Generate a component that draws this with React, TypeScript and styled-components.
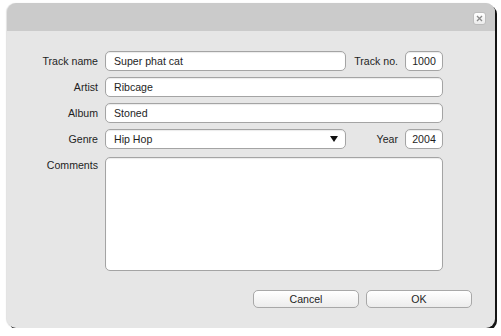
import React from 'react';
import styled, { createGlobalStyle } from 'styled-components';

const GlobalStyle = createGlobalStyle`
  html, body {
    margin: 0;
    padding: 0;
    background: #ffffff;
  }
  body {
    font-family: "Liberation Sans", Arial, sans-serif;
    font-size: 10.6px;
    color: #1e1e1e;
  }
`;

const Page = styled.div`
  padding: 3px 0 0 7px;
`;

const Window = styled.div`
  width: 488px;
  height: 325px;
  background: #e6e6e6;
  border-radius: 9px;
  box-shadow: 2px 2px 0 #151515, -1px 0 1px rgba(0, 0, 0, 0.12);
  overflow: hidden;
  display: flex;
  flex-direction: column;
`;

const TitleBar = styled.div`
  height: 28px;
  background: #cbcbcb;
  display: flex;
  align-items: center;
  justify-content: flex-end;
  padding-right: 9px;
`;

const CloseButton = styled.div`
  width: 11px;
  height: 11px;
  border: 1px solid #bdbdbd;
  border-radius: 3px;
  background: linear-gradient(#ffffff, #ececec);
  display: flex;
  align-items: center;
  justify-content: center;
  margin-top: 3px;
`;

const Body = styled.div`
  flex: 1;
  padding: 20px 0 0 0;
  display: flex;
  flex-direction: column;
`;

const Form = styled.div`
  display: grid;
  grid-template-columns: 91px 241px 45px 38px;
  column-gap: 7px;
  row-gap: 6px;
  align-items: center;
`;

const Label = styled.label<{ top?: boolean }>`
  text-align: right;
  align-self: ${p => (p.top ? 'start' : 'center')};
  padding-top: ${p => (p.top ? '4px' : '0')};
  white-space: nowrap;
`;

const Field = styled.div<{ span?: number; tall?: number }>`
  grid-column: span ${p => p.span || 1};
  height: ${p => p.tall || 18}px;
  background: #ffffff;
  border: 1px solid #a4a4a4;
  border-radius: 5px;
  box-shadow: inset 0 1px 1px rgba(0, 0, 0, 0.08);
  display: flex;
  align-items: center;
  justify-content: space-between;
  padding: 0 8px;
  box-sizing: content-box;
`;

const SmallField = styled(Field)`
  justify-content: center;
  padding: 0;
`;

const CommentBox = styled(Field)`
  margin-top: 2px;
`;

const Arrow = styled.span`
  width: 0;
  height: 0;
  border-left: 4px solid transparent;
  border-right: 4px solid transparent;
  border-top: 6px solid #111;
  margin-right: -1px;
`;

const Actions = styled.div`
  display: flex;
  justify-content: flex-end;
  gap: 7px;
  padding: 19px 23px 0 0;
`;

const Button = styled.button`
  width: 106px;
  height: 18px;
  border: 1px solid #a8a8a8;
  border-radius: 5px;
  background: linear-gradient(#ffffff, #ececec);
  font-family: "Liberation Sans", Arial, sans-serif;
  font-size: 10.6px;
  color: #1e1e1e;
  padding: 0;
`;

export default function App() {
  return (
    <Page>
      <GlobalStyle />
      <Window>
        <TitleBar>
          <CloseButton>
            <svg width="7" height="7" viewBox="0 0 7 7">
              <path d="M1 1L6 6M6 1L1 6" stroke="#8a8a8a" strokeWidth="1.3" />
            </svg>
          </CloseButton>
        </TitleBar>
        <Body>
          <Form>
            <Label>Track name</Label>
            <Field>Super phat cat</Field>
            <Label>Track no.</Label>
            <SmallField>1000</SmallField>

            <Label>Artist</Label>
            <Field span={3}>Ribcage</Field>

            <Label>Album</Label>
            <Field span={3}>Stoned</Field>

            <Label>Genre</Label>
            <Field>
              Hip Hop
              <Arrow />
            </Field>
            <Label>Year</Label>
            <SmallField>2004</SmallField>

            <Label top>Comments</Label>
            <CommentBox span={3} tall={112} />
          </Form>
          <Actions>
            <Button>Cancel</Button>
            <Button>OK</Button>
          </Actions>
        </Body>
      </Window>
    </Page>
  );
}
